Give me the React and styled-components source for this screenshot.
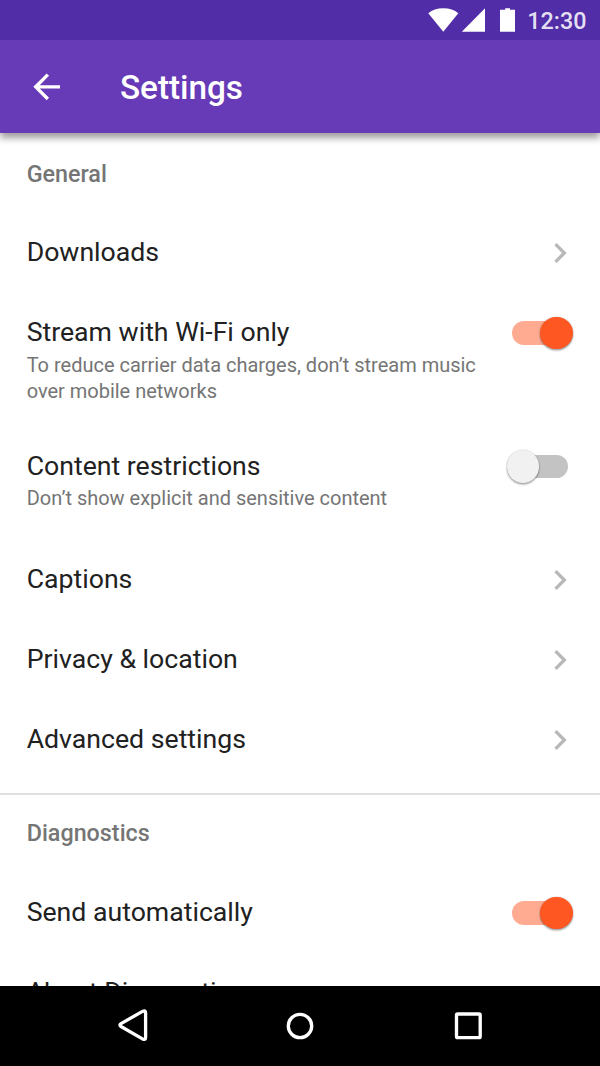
import React from "react";
import styled, { createGlobalStyle } from "styled-components";

const GlobalStyle = createGlobalStyle`
  * { box-sizing: border-box; }
  html, body { margin: 0; padding: 0; background: #fff; }
  body { font-family: Roboto, "Liberation Sans", sans-serif; overflow: hidden; }
`;

const Screen = styled.div`
  width: 600px;
  height: 1066px;
  display: flex;
  flex-direction: column;
  overflow: hidden;
  background: #fff;
`;

const StatusBar = styled.div`
  flex: none;
  height: 40px;
  display: flex;
  align-items: center;
  justify-content: flex-end;
  padding-right: 13.5px;
  background: #512da8;
  z-index: 2;
`;

const StatusIcons = styled.svg`
  width: 90px;
  height: 40px;
  margin-right: 12px;
  fill: #fff;
`;

const Clock = styled.span`
  margin-top: 1px;
  font-size: 23.33px;
  font-weight: 500;
  line-height: 40px;
  color: rgba(255, 255, 255, 0.87);
`;

const AppBar = styled.header`
  flex: none;
  height: 93.33px;
  display: flex;
  align-items: center;
  padding-left: 26.67px;
  background: #673ab7;
  z-index: 1;
  box-shadow: 0 5px 7px rgba(0, 0, 0, 0.38);
`;

const BackIcon = styled.svg`
  width: 40px;
  height: 40px;
  fill: #fff;
`;

const Title = styled.h1`
  margin: 2px 0 0 53.33px;
  font-size: 33.33px;
  font-weight: 500;
  line-height: 40px;
  letter-spacing: -0.04px;
  color: #fff;
`;

const List = styled.main`
  flex: 1;
  min-height: 0;
  overflow: hidden;
`;

const Section = styled.section`
  padding-bottom: 13.33px;
  & + & {
    border-top: 2px solid #e0e0e0;
  }
`;

const SectionLabel = styled.h2`
  margin: 0;
  padding: ${(p) => p.$offset || 0}px 26.67px 0;
  height: ${(p) => p.$height || 80}px;
  font-size: 23.33px;
  font-weight: 500;
  line-height: ${(p) => p.$lineHeight || 80}px;
  color: #757575;
`;

const Row = styled.div`
  display: flex;
  justify-content: space-between;
  align-items: flex-start;
  height: ${(p) => p.$height || 80}px;
  padding: 23.1px 26.67px 0;
`;

const RowText = styled.div`
  width: 470px;
`;

const Primary = styled.div`
  font-size: 26.67px;
  line-height: 32px;
  color: #212121;
`;

const Secondary = styled.div`
  margin-top: 3.2px;
  font-size: 20px;
  line-height: 26.67px;
  letter-spacing: -0.01px;
  color: #757575;
`;

const Chevron = styled.svg`
  width: 40px;
  height: 40px;
  margin: -3.5px -6.67px 0 0;
  fill: #b8b8b8;
`;

const Track = styled.div`
  flex: none;
  display: flex;
  align-items: center;
  justify-content: ${(p) => (p.$on ? "flex-end" : "flex-start")};
  width: ${(p) => (p.$on ? 56.6 : 57)}px;
  height: 23.33px;
  margin: 4.9px ${(p) => (p.$on ? 4.9 : 5)}px 0 0;
  border-radius: 12px;
  background: ${(p) => (p.$on ? "#ffab91" : "#c3c3c3")};
`;

const Thumb = styled.div`
  flex: none;
  width: 32.6px;
  height: 32.6px;
  margin: 0 -4.5px;
  border-radius: 50%;
  background: ${(p) => (p.$on ? "#ff5722" : "#f1f1f1")};
  box-shadow: 0 1.5px 2px rgba(0, 0, 0, 0.34), 0 0 2px rgba(0, 0, 0, 0.2);
`;

const NavBar = styled.nav`
  flex: none;
  height: 80px;
  display: flex;
  justify-content: center;
  background: #000;
`;

const NavIcon = styled.svg`
  width: 168px;
  height: 80px;
  fill: none;
  stroke: #fff;
  stroke-width: 3.33;
  stroke-linejoin: round;
`;

const LinkRow = ({ label }) => (
  <Row>
    <RowText>
      <Primary>{label}</Primary>
    </RowText>
    <Chevron viewBox="0 0 24 24">
      <path d="M10 6L8.59 7.41 13.17 12l-4.58 4.59L10 18l6-6z" />
    </Chevron>
  </Row>
);

const SwitchRow = ({ label, detail, on, height }) => (
  <Row $height={height}>
    <RowText>
      <Primary>{label}</Primary>
      {detail && <Secondary>{detail}</Secondary>}
    </RowText>
    <Track $on={on}>
      <Thumb $on={on} />
    </Track>
  </Row>
);

export default function App() {
  return (
    <Screen>
      <GlobalStyle />
      <StatusBar>
        <StatusIcons viewBox="0 0 90 40">
          <path d="M3.3 13.3Q9 8.2 18.3 8.2T33.3 13.3L18.3 31.8z" />
          <path d="M60 8.3V31.8H36.8z" />
          <path d="M75 9.8H80.2V8.2H85V9.8H90V31.8H75z" />
        </StatusIcons>
        <Clock>12:30</Clock>
      </StatusBar>
      <AppBar>
        <BackIcon viewBox="0.2 0.1 24 24">
          <path d="M20 11H7.83l5.59-5.59L12 4l-8 8 8 8 1.41-1.41L7.83 13H20v-2z" />
        </BackIcon>
        <Title>Settings</Title>
      </AppBar>
      <List>
        <Section>
          <SectionLabel $offset={1}>General</SectionLabel>
          <LinkRow label="Downloads" />
          <SwitchRow
            on
            height={133.33}
            label="Stream with Wi-Fi only"
            detail={<>To reduce carrier data charges, don’t stream music<br />over mobile networks</>}
          />
          <SwitchRow
            height={113.33}
            label="Content restrictions"
            detail="Don’t show explicit and sensitive content"
          />
          <LinkRow label="Captions" />
          <LinkRow label="Privacy & location" />
          <LinkRow label="Advanced settings" />
        </Section>
        <Section>
          <SectionLabel $height={78} $lineHeight={76.4}>Diagnostics</SectionLabel>
          <SwitchRow on label="Send automatically" />
          <Row>
            <Primary>About Diagnostics</Primary>
          </Row>
        </Section>
      </List>
      <NavBar>
        <NavIcon viewBox="0 0 168 80">
          <path d="M73 37.6L94.5 25.4Q97.6 24 97.6 26.8V51.6Q97.6 54.4 94.5 52.9L73 40.5Q70.8 39 73 37.6z" />
        </NavIcon>
        <NavIcon viewBox="0 0 168 80">
          <circle cx="84" cy="40" r="11.7" />
        </NavIcon>
        <NavIcon viewBox="0 0 168 80">
          <rect x="72.5" y="28" width="23.7" height="23.7" rx="1.2" />
        </NavIcon>
      </NavBar>
    </Screen>
  );
}
